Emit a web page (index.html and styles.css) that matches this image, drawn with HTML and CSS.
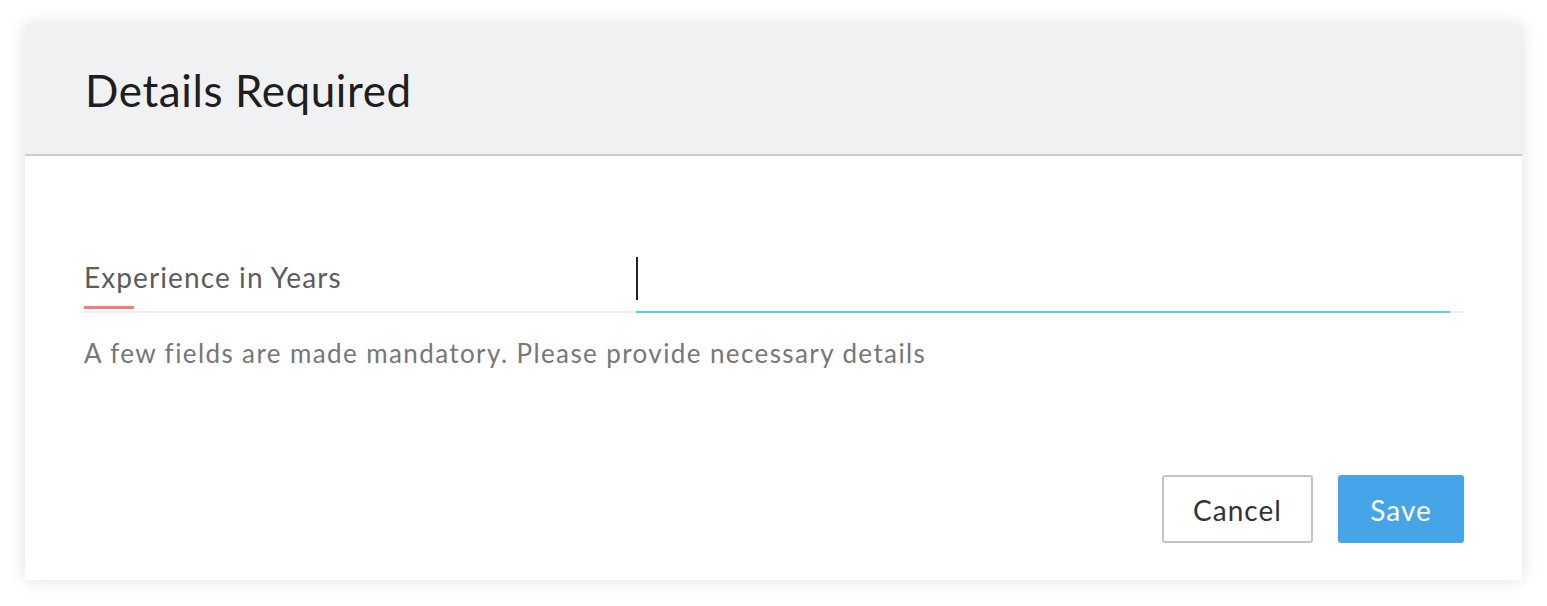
FILE: index.html
```html
<!DOCTYPE html>
<html>
<head>
<meta charset="utf-8">
<link rel="stylesheet" href="styles.css">
</head>
<body>
<div class="dialog">
  <div class="dialog-header">
    <h1 class="dialog-title">Details Required</h1>
  </div>
  <div class="dialog-body">
    <div class="field-row">
      <div class="field-label">
        <span class="label-text">Experience in Years</span>
        <span class="mandatory-mark"></span>
      </div>
      <div class="field-input">
        <span class="caret"></span>
      </div>
    </div>
    <p class="helper">A few fields are made mandatory. Please provide necessary details</p>
  </div>
  <div class="dialog-footer">
    <button class="btn btn-cancel">Cancel</button>
    <button class="btn btn-save">Save</button>
  </div>
</div>
</body>
</html>
```
FILE: styles.css
```css
html, body {
  margin: 0;
  padding: 0;
  background: #ffffff;
}
body {
  font-family: "Lato", "Liberation Sans", sans-serif;
  padding: 24px 25px 26px 25px;
}
.dialog {
  width: 1497px;
  height: 556px;
  background: #fff;
  box-shadow: 0 0 18px rgba(0,0,0,0.12);
  border-radius: 3px 3px 0 0;
  display: flex;
  flex-direction: column;
}
.dialog-header {
  height: 130px;
  background: #f0f1f3;
  border-bottom: 2px solid #cccccc;
  display: flex;
  align-items: center;
  padding: 0 60px;
  border-radius: 3px 3px 0 0;
}
.dialog-title {
  margin: 2px 0 0 0;
  font-weight: 400;
  font-size: 44px;
  color: #1e1e1e;
  letter-spacing: 0.6px;
}
.dialog-body {
  padding: 100px 58px 0 59px;
  flex: 1;
}
.field-row {
  display: flex;
  border-bottom: 2px solid #efefef;
  height: 55px;
}
.field-label {
  width: 552px;
  display: flex;
  flex-direction: column;
  justify-content: flex-end;
}
.label-text {
  font-size: 28px;
  color: #5c5c5c;
  line-height: 30px;
  letter-spacing: 1.1px;
}
.mandatory-mark {
  display: block;
  width: 50px;
  height: 3px;
  background: #f47c7c;
  margin-top: 14px;
  margin-bottom: 2px;
}
.field-input {
  width: 814px;
  position: relative;
  border-bottom: 2px solid #5ccbee;
  margin-bottom: -2px;
}
.caret {
  position: absolute;
  left: 0;
  top: 1px;
  width: 2px;
  height: 43px;
  background: #222;
}
.helper {
  margin: 24px 0 0 0;
  font-size: 26px;
  color: #777777;
  letter-spacing: 1.4px;
}
.dialog-footer {
  display: flex;
  justify-content: flex-end;
  gap: 25px;
  padding: 0 58px 37px 0;
}
.btn {
  font-family: "Lato", "Liberation Sans", sans-serif;
  font-size: 28px;
  height: 68px;
  border-radius: 3px;
  cursor: pointer;
  padding: 2px 0 0 0;
  letter-spacing: 1px;
}
.btn-cancel {
  width: 151px;
  background: #fff;
  border: 2px solid #c4c4c4;
  color: #333;
}
.btn-save {
  width: 126px;
  background: #45a5e8;
  border: none;
  color: #fff;
}
```
